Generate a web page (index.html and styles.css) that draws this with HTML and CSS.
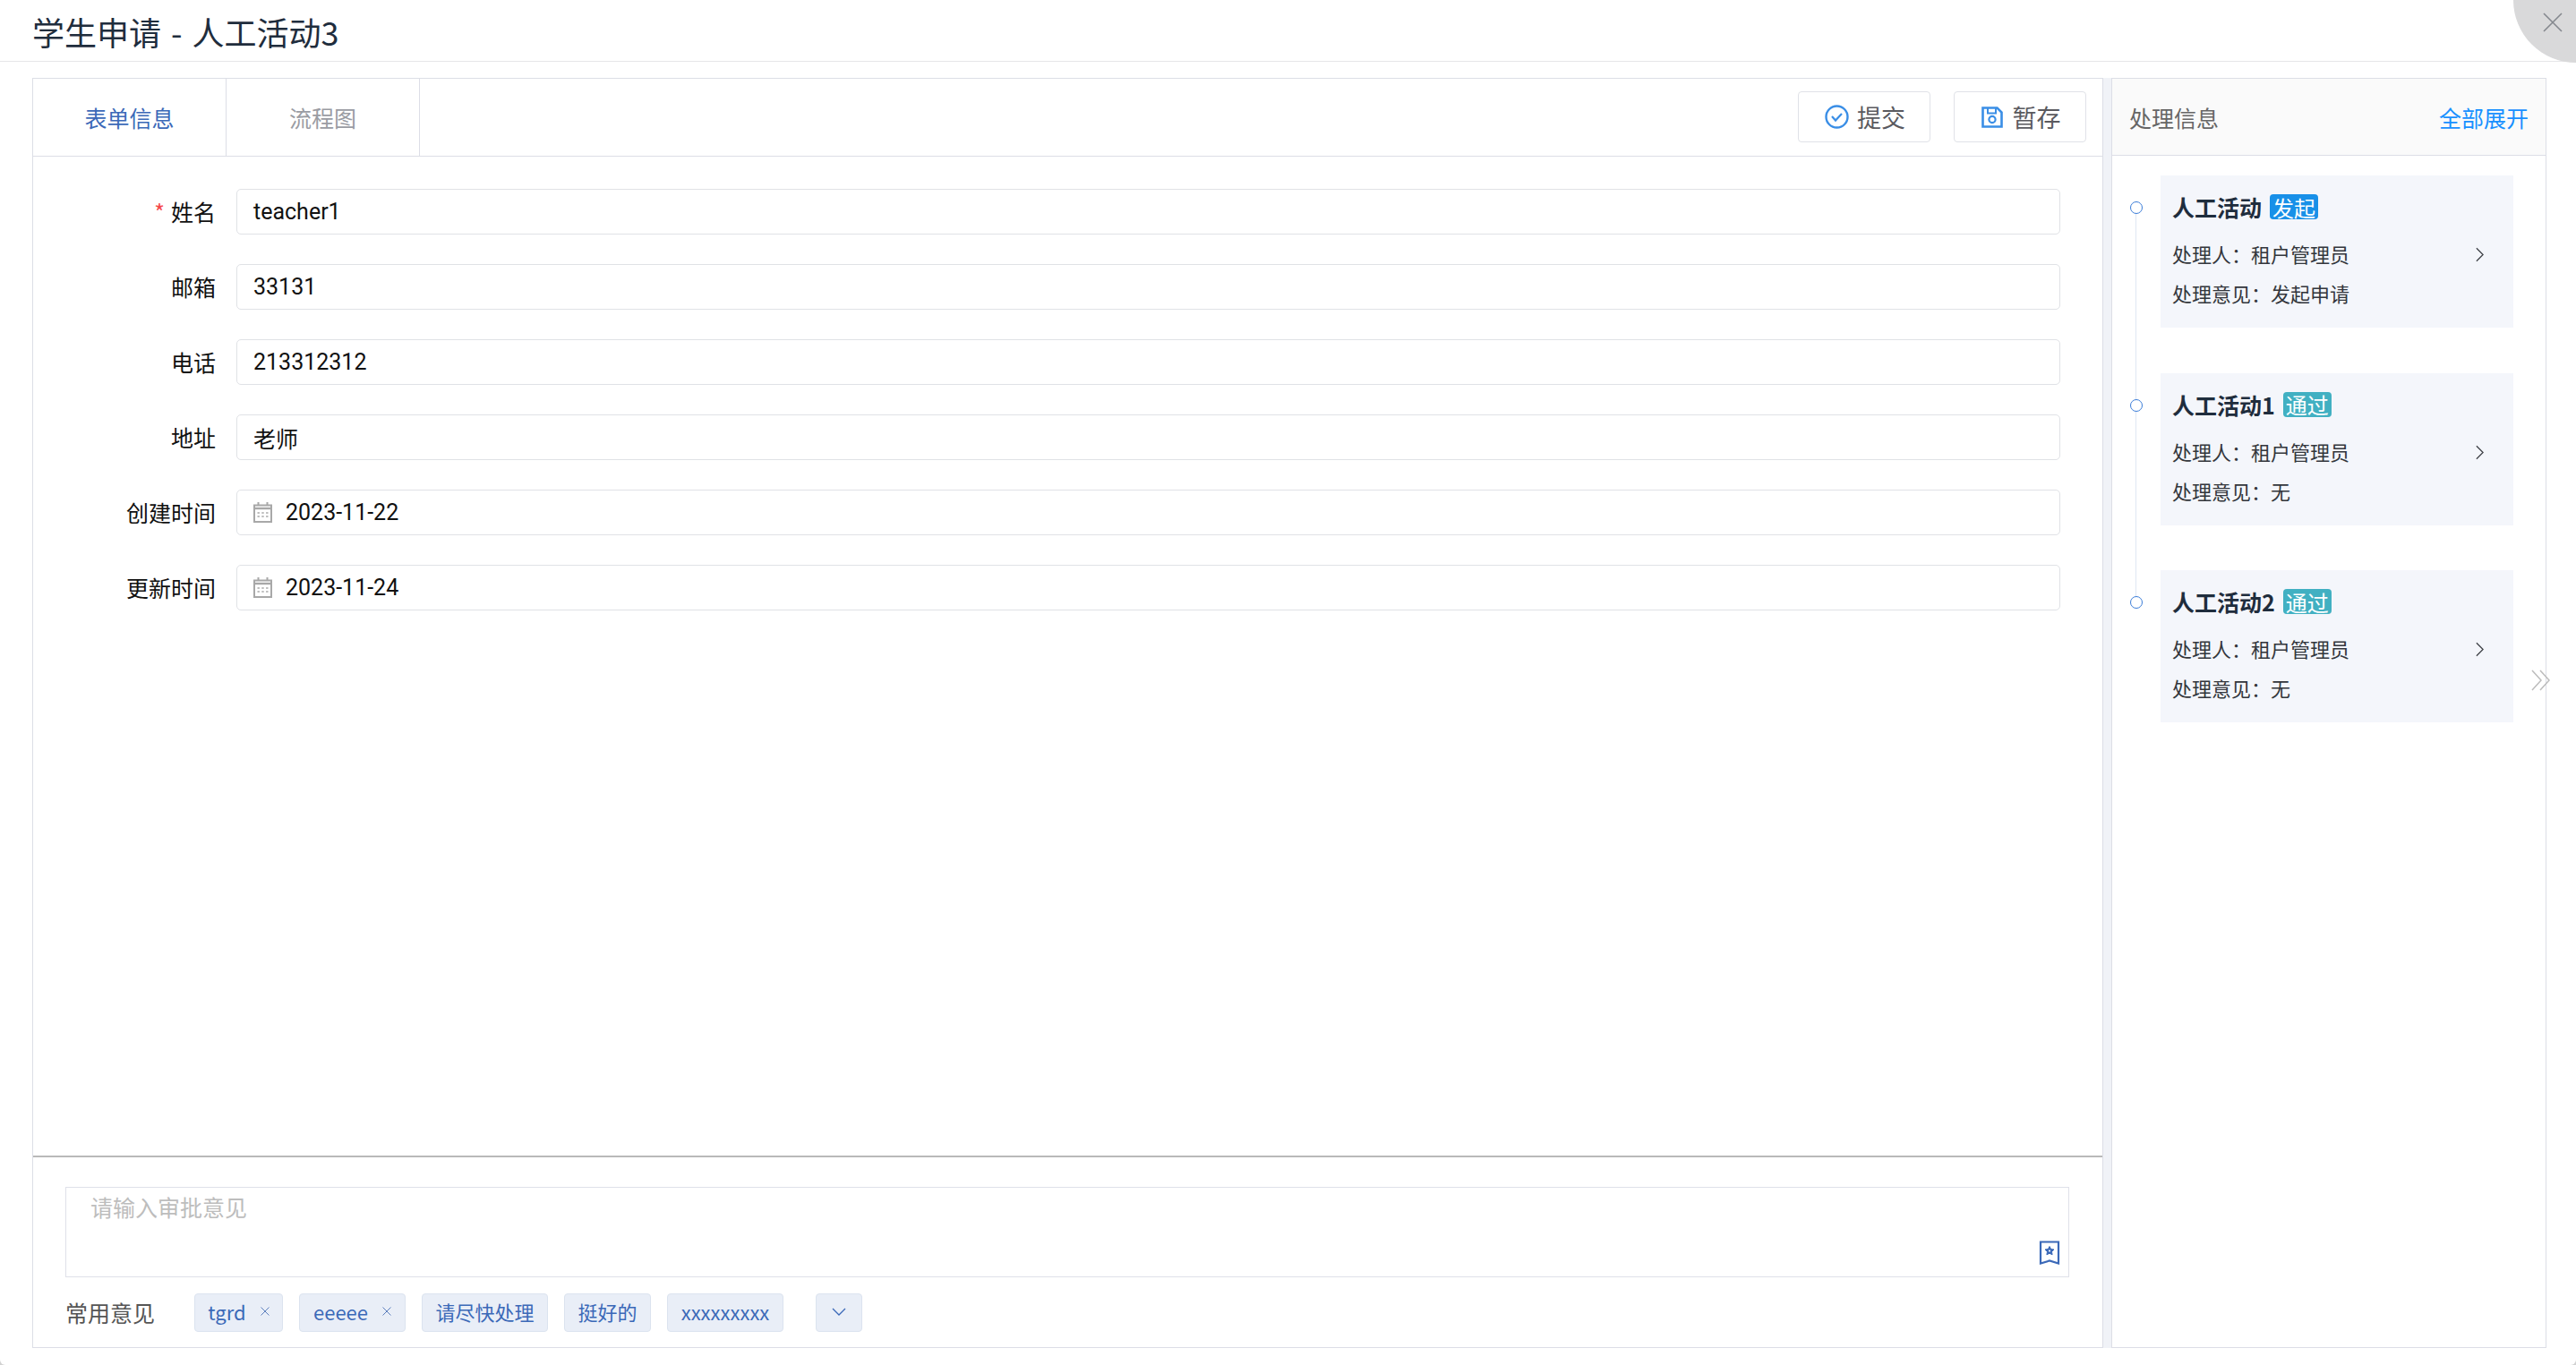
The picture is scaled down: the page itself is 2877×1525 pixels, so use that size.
FILE: index.html
```html
<!DOCTYPE html>
<html lang="zh-CN">
<head>
<meta charset="utf-8">
<title>学生申请 - 人工活动3</title>
<link rel="stylesheet" href="styles.css">
</head>
<body>
<div class="modal">
  <header class="modal-head">
    <h1 class="modal-title">学生申请 - 人工活动3</h1>
    <button class="close" aria-label="关闭">
      <svg viewBox="0 0 22 22" width="22" height="22"><path d="M1 1l20 20M21 1L1 21" fill="none" stroke="#85888e" stroke-width="1.6"/></svg>
    </button>
  </header>
  <main class="modal-body">
    <section class="form-panel">
      <div class="tabbar">
        <div class="tab tab-active">表单信息</div>
        <div class="tab">流程图</div>
        <div class="actions">
          <button class="btn btn-submit">
            <svg viewBox="0 0 27 27" width="27" height="27"><circle cx="13.5" cy="13.5" r="12" fill="none" stroke="#3a8ee6" stroke-width="2.4"/><path d="M8 13l4 4.500 7-7.500" fill="none" stroke="#3a8ee6" stroke-width="2.200"/></svg>
            <span>提交</span>
          </button>
          <button class="btn btn-save">
            <svg viewBox="0 0 24 24" width="24" height="24"><path d="M1.500 1.500h16l5 5v16h-21z" fill="none" stroke="#3a8ee6" stroke-width="2.600"/><path d="M7 2v5.500h9V2" fill="none" stroke="#3a8ee6" stroke-width="2"/><circle cx="12" cy="14.500" r="3.600" fill="none" stroke="#3a8ee6" stroke-width="2.200"/></svg>
            <span>暂存</span>
          </button>
        </div>
      </div>
      <form class="form">
        <div class="field"><label class="label"><i class="req">*</i>姓名</label><div class="input">teacher1</div></div>
        <div class="field"><label class="label">邮箱</label><div class="input">33131</div></div>
        <div class="field"><label class="label">电话</label><div class="input">213312312</div></div>
        <div class="field"><label class="label">地址</label><div class="input">老师</div></div>
        <div class="field"><label class="label">创建时间</label><div class="input input-date">
          <svg class="cal" viewBox="0 0 21 23" width="21" height="23"><path d="M1 3.500h19v18.500H1z" fill="none" stroke="#a8a8a8" stroke-width="2"/><path d="M1 7h19" stroke="#a8a8a8" stroke-width="2.400"/><path d="M5.500 0v4M15.500 0v4" stroke="#a8a8a8" stroke-width="2"/><path d="M4.500 12h12M4.500 16h12" fill="none" stroke="#a8a8a8" stroke-width="1.600" stroke-dasharray="2.400 2.400"/></svg>
          2023-11-22</div></div>
        <div class="field"><label class="label">更新时间</label><div class="input input-date">
          <svg class="cal" viewBox="0 0 21 23" width="21" height="23"><path d="M1 3.500h19v18.500H1z" fill="none" stroke="#a8a8a8" stroke-width="2"/><path d="M1 7h19" stroke="#a8a8a8" stroke-width="2.400"/><path d="M5.500 0v4M15.500 0v4" stroke="#a8a8a8" stroke-width="2"/><path d="M4.500 12h12M4.500 16h12" fill="none" stroke="#a8a8a8" stroke-width="1.600" stroke-dasharray="2.400 2.400"/></svg>
          2023-11-24</div></div>
      </form>
      <div class="opinion">
        <div class="textarea">
          <span class="placeholder">请输入审批意见</span>
          <svg class="bookmark" viewBox="0 0 24 27" width="24" height="27"><path d="M2 1.500h20v24l-10-3-10 3z" fill="none" stroke="#3b69b8" stroke-width="2.200"/><path d="M12 6.500l1.600 3 3.400.5-2.500 2.400.6 3.400-3.100-1.600-3.100 1.600.6-3.400L7 10l3.400-.5z" fill="#3b69b8" stroke="#3b69b8" stroke-width="1"/><circle cx="12" cy="11.500" r="1.100" fill="#fff"/></svg>
        </div>
        <div class="quick">
          <span class="quick-label">常用意见</span>
          <div class="chips">
            <span class="chip chip-1">tgrd<svg class="chip-x" viewBox="0 0 10 10" width="10" height="10"><path d="M.5.5l9 9M9.500.5l-9 9" stroke="#5c7fbd" stroke-width="1" fill="none"/></svg></span>
            <span class="chip chip-2">eeeee<svg class="chip-x" viewBox="0 0 10 10" width="10" height="10"><path d="M.5.5l9 9M9.500.5l-9 9" stroke="#5c7fbd" stroke-width="1" fill="none"/></svg></span>
            <span class="chip chip-3">请尽快处理</span>
            <span class="chip chip-4">挺好的</span>
            <span class="chip chip-5">xxxxxxxxx</span>
            <span class="chip chip-more"><svg viewBox="0 0 16 9" width="16" height="9"><path d="M1 1l7 7 7-7" stroke="#3b69b8" stroke-width="1.300" fill="none"/></svg></span>
          </div>
        </div>
      </div>
    </section>
    <aside class="info-panel">
      <div class="info-head"><span class="info-title">处理信息</span><a class="expand">全部展开</a></div>
      <ol class="timeline">
        <li class="step">
          <article class="card">
            <div class="card-title">人工活动<span class="tag tag-start">发起</span></div>
            <div class="card-row">处理人：租户管理员<svg class="chev" viewBox="0 0 10 18" width="9" height="17"><path d="M1 1l8 8-8 8" fill="none" stroke="#3d3f45" stroke-width="1.400"/></svg></div>
            <div class="card-row">处理意见：发起申请</div>
          </article>
        </li>
        <li class="step">
          <article class="card">
            <div class="card-title">人工活动1<span class="tag tag-pass">通过</span></div>
            <div class="card-row">处理人：租户管理员<svg class="chev" viewBox="0 0 10 18" width="9" height="17"><path d="M1 1l8 8-8 8" fill="none" stroke="#3d3f45" stroke-width="1.400"/></svg></div>
            <div class="card-row">处理意见：无</div>
          </article>
        </li>
        <li class="step">
          <article class="card">
            <div class="card-title">人工活动2<span class="tag tag-pass">通过</span></div>
            <div class="card-row">处理人：租户管理员<svg class="chev" viewBox="0 0 10 18" width="9" height="17"><path d="M1 1l8 8-8 8" fill="none" stroke="#3d3f45" stroke-width="1.400"/></svg></div>
            <div class="card-row">处理意见：无</div>
          </article>
        </li>
      </ol>
      <svg class="collapse" viewBox="0 0 21 24" width="21" height="24"><path d="M1 1l10 11L1 23M10 1l10 11-10 11" fill="none" stroke="#bcbcbc" stroke-width="1.500"/></svg>
    </aside>
  </main>
</div>
</body>
</html>
```

FILE: styles.css
```css
* { box-sizing: border-box; }
html, body { margin: 0; height: 100%; }
body {
  background: #d2d2d2;
  color: #1f2d3d;
  font-family: "Noto Sans CJK SC", "Noto Sans", sans-serif;
  font-size: 25px;
  overflow: hidden;
}
.modal {
  height: 1525px;
  display: flex;
  flex-direction: column;
  background: #fff;
  position: relative;
  overflow: hidden;
  border-radius: 0 0 6px 6px;
}
.modal-head {
  height: 69px;
  flex: none;
  border-bottom: 1px solid #e6e6e8;
  padding: 2px 0 0 36px;
  display: flex;
  align-items: center;
}
.modal-title {
  margin: 0;
  font-size: 36px;
  font-weight: 400;
  line-height: 66px;
  word-spacing: 3px;
  color: #1f2d3d;
}
.close {
  position: absolute;
  top: -70px;
  right: -70px;
  width: 140px;
  height: 140px;
  border: 0;
  padding: 0;
  border-radius: 50%;
  background: #d9d9da;
}
.close svg { position: absolute; left: 33px; top: 84px; }
.modal-body {
  flex: 1;
  min-height: 0;
  display: flex;
  gap: 9px;
  padding: 18px 33px 19px 36px;
}
.form-panel {
  width: 2313px;
  flex: none;
  border: 1px solid #dcdee6;
  display: flex;
  flex-direction: column;
  position: relative;
}
.form-panel::after {
  content: "";
  position: absolute;
  top: -1px;
  bottom: -1px;
  right: -10px;
  width: 9px;
  background: #f0f2f7;
}
.tabbar {
  height: 87px;
  flex: none;
  display: flex;
  border-bottom: 1px solid #dcdee6;
}
.tab {
  width: 216px;
  border-right: 1px solid #dcdee6;
  display: flex;
  align-items: center;
  justify-content: center;
  color: #9a9ca3;
  font-size: 25px;
}
.tab-active { color: #3b69b8; }
.actions {
  margin-left: auto;
  display: flex;
  gap: 26px;
  padding: 14px 18px 0 0;
}
.btn {
  width: 148px;
  height: 57px;
  background: #fff;
  border: 1px solid #e0e2e8;
  border-radius: 4px;
  display: flex;
  align-items: center;
  justify-content: center;
  gap: 9px;
  padding: 0;
  font: inherit;
  font-size: 27px;
  color: #5a5a5f;
}
.btn-save { gap: 11px; padding-left: 2px; }
.btn-submit { padding-left: 2px; }
.form {
  flex: 1;
  min-height: 0;
  padding-top: 36px;
}
.field {
  display: flex;
  align-items: center;
  height: 51px;
  margin-bottom: 33px;
}
.label {
  width: 204px;
  flex: none;
  text-align: right;
  color: #111;
  line-height: 51px;
}
.req {
  font-style: normal;
  color: #f5484a;
  margin-right: 7px;
}
.input {
  margin-left: 23px;
  width: 2037px;
  height: 51px;
  border: 1px solid #e0e2e6;
  border-radius: 5px;
  padding-left: 18px;
  display: flex;
  align-items: center;
  color: #111;
  font-family: Roboto, "Noto Sans CJK SC", sans-serif;
}
.cal { margin-right: 15px; flex: none; }
.opinion {
  height: 214px;
  flex: none;
  border-top: 2px solid #b9b9b9;
  padding: 33px 36px 0 36px;
}
.textarea {
  position: relative;
  height: 101px;
  width: 2238px;
  border: 1px solid #dfe1e9;
  padding: 3px 27px;
  line-height: 36px;
}
.placeholder { color: #bdbdbd; font-size: 25px; }
.bookmark { position: absolute; right: 9px; bottom: 13px; }
.quick {
  display: flex;
  align-items: center;
  margin-top: 18px;
  height: 43px;
}
.quick-label {
  width: 144px;
  flex: none;
  color: #555;
  font-size: 25px;
  line-height: 41px;
}
.chips { display: flex; }
.chip {
  height: 43px;
  background: #e9eef7;
  border: 1px solid #dbe3ef;
  border-radius: 4px;
  color: #3b69b8;
  font-size: 22px;
  display: flex;
  align-items: center;
  justify-content: center;
  padding-bottom: 3px;
}
.chip-1 { width: 99px; margin-right: 18px; }
.chip-2 { width: 119px; margin-right: 18px; }
.chip-3 { width: 141px; margin-right: 18px; }
.chip-4 { width: 97px; margin-right: 18px; }
.chip-5 { width: 130px; margin-right: 36px; }
.chip-more { width: 52px; }
.chip-x { margin-left: 16px; }
.info-panel {
  flex: 1;
  min-width: 0;
  position: relative;
  border: 1px solid #dcdee6;
  display: flex;
  flex-direction: column;
}
.info-head {
  height: 86px;
  flex: none;
  background: #fafafa;
  border-bottom: 1px solid #dcdee6;
  display: flex;
  align-items: center;
  justify-content: space-between;
  padding: 0 19px;
  font-size: 25px;
}
.info-title { color: #666; }
.expand { color: #1890ff; }
.timeline {
  list-style: none;
  margin: 0;
  padding: 22px 0 0 54px;
}
.step {
  position: relative;
  height: 220.500px;
}
.step::before {
  content: "";
  position: absolute;
  left: -34px;
  top: 29px;
  width: 12px;
  height: 12px;
  border: 1.500px solid #3b7dd8;
  border-radius: 50%;
  background: #fff;
  z-index: 1;
}
.step:not(:last-child)::after {
  content: "";
  position: absolute;
  left: -28px;
  top: 35px;
  width: 1px;
  height: 220px;
  background: #dfe7f3;
}
.card {
  width: 394px;
  height: 170px;
  background: #f4f6fb;
  padding: 21px 13px 0;
  position: relative;
}
.card-title {
  display: flex;
  align-items: center;
  height: 28px;
  font-weight: 700;
  font-size: 25px;
  color: #1f2d3d;
}
.tag {
  margin-left: 9px;
  height: 28px;
  width: 54px;
  border-radius: 4px;
  color: #fff;
  font-weight: 400;
  font-size: 24px;
  display: flex;
  align-items: center;
  justify-content: center;
}
.tag-start { background: #1890e8; }
.tag-pass { background: #41b0c2; }
.card-row {
  font-size: 22px;
  color: #33363c;
  line-height: 44px;
}
.card-title + .card-row { margin-top: 16px; }
.chev { position: absolute; right: 33px; top: 80px; }
.collapse { position: absolute; right: -5px; top: 660px; }
```
